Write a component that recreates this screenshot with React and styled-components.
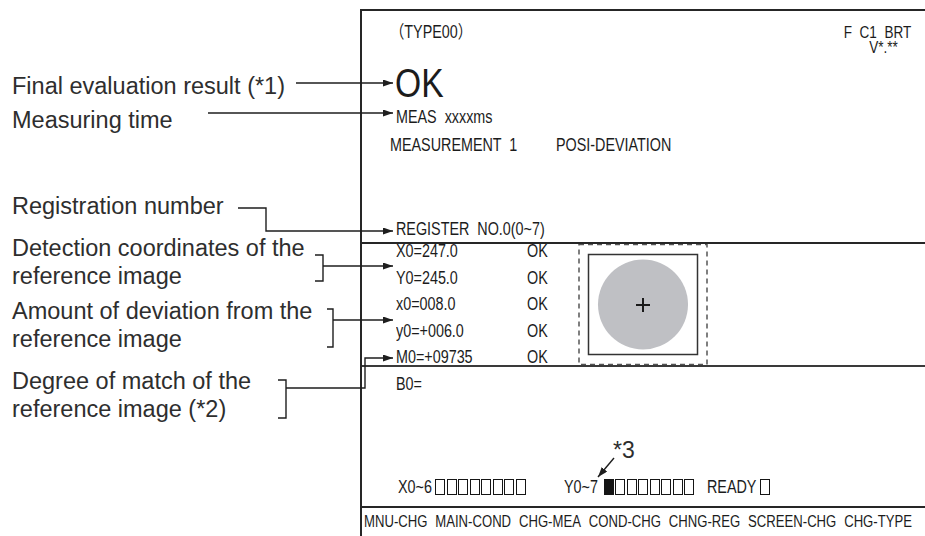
import React from "react";
import styled, { createGlobalStyle, css } from "styled-components";

const GlobalStyle = createGlobalStyle`
  html, body {
    margin: 0;
    padding: 0;
    background: #fff;
  }
  body {
    font-family: "Liberation Sans", Arial, sans-serif;
  }
`;

// the monitor font is a condensed sans; Liberation Sans squeezed horizontally stands in for it
const NARROW = 0.82;
const condensed = css`
  display: inline-block;
  transform: scaleX(${NARROW});
  transform-origin: left center;
`;

const labels = [
  { gap: 0, lines: ["Final evaluation result (*1)"] },
  { gap: 6, lines: ["Measuring time"] },
  { gap: 58, lines: ["Registration number"] },
  { gap: 14, lines: ["Detection coordinates of the", "reference image"] },
  { gap: 7, lines: ["Amount of deviation from the", "reference image"] },
  { gap: 14, lines: ["Degree of match of the", "reference image (*2)"] },
];

const results = [
  { name: "X0=247.0", state: "OK" },
  { name: "Y0=245.0", state: "OK" },
  { name: "x0=008.0", state: "OK" },
  { name: "y0=+006.0", state: "OK" },
  { name: "M0=+09735", state: "OK" },
];

const menu = ["MNU-CHG", "MAIN-COND", "CHG-MEA", "COND-CHG", "CHNG-REG", "SCREEN-CHG", "CHG-TYPE"];

function Bits({ count, lit = -1 }) {
  return (
    <BitStrip>
      {Array.from({ length: count }, (_, i) => (
        <Bit key={i} $on={i === lit} />
      ))}
    </BitStrip>
  );
}

function Leaders() {
  return (
    <Overlay viewBox="0 0 925 536">
      <defs>
        <marker
          id="tip"
          viewBox="0 0 10 7"
          refX="10"
          refY="3.5"
          markerWidth="10"
          markerHeight="7"
          markerUnits="userSpaceOnUse"
          orient="auto"
        >
          <path d="M0,0 L10,3.5 L0,7 z" fill="#1e1e1e" />
        </marker>
      </defs>
      <g fill="none" stroke="#1e1e1e" strokeWidth="1.4">
        <path d="M296,83 H393" markerEnd="url(#tip)" />
        <path d="M208,113 H393" markerEnd="url(#tip)" />
        <path d="M238,208 H266 V231 H393" markerEnd="url(#tip)" />
        <path d="M315,255 H323 V281 H315" />
        <path d="M323,266 H393" markerEnd="url(#tip)" />
        <path d="M327,309 H333 V347 H327" />
        <path d="M333,320 H393" markerEnd="url(#tip)" />
        <path d="M278,380 H286 V418 H278" />
        <path d="M286,388 H365 V358 H393" markerEnd="url(#tip)" />
        <path d="M614,458 L598,477" markerEnd="url(#tip)" />
      </g>
    </Overlay>
  );
}

function Preview() {
  return (
    <PreviewBox>
      <svg width="130" height="121" viewBox="0 0 130 121">
        <rect x="1" y="0.5" width="128" height="120" fill="none" stroke="#555" strokeWidth="1.5" strokeDasharray="5 4" />
        <rect x="10.5" y="10.5" width="109" height="100" fill="none" stroke="#333" strokeWidth="1.5" />
        <circle cx="65" cy="60.5" r="45" fill="#bfc0c4" />
        <path d="M58,61 H72 M65,54 V68" stroke="#1a1a1a" strokeWidth="2" />
      </svg>
    </PreviewBox>
  );
}

export default function App() {
  return (
    <>
      <GlobalStyle />
      <Page>
        <LabelColumn>
          {labels.map((l, i) => (
            <Label key={i} $gap={l.gap}>
              {l.lines.map((t, j) => (
                <div key={j}>{t}</div>
              ))}
            </Label>
          ))}
        </LabelColumn>

        <Screen>
          <TopBlock>
            <Header>
              <TypeName>（TYPE00）</TypeName>
              <Status>
                <div>F  C1  BRT</div>
                <Version>V*.**</Version>
              </Status>
            </Header>
            <Verdict>OK</Verdict>
            <ScreenLine $top={4}>MEAS  xxxxms</ScreenLine>
            <MeasureRow>
              <Cell>MEASUREMENT  1</Cell>
              <Cell>POSI-DEVIATION</Cell>
            </MeasureRow>
            <Register>REGISTER  NO.0(0~7)</Register>
          </TopBlock>

          <TableBand>
            <RowList>
              {results.map((r) => (
                <ResultRow key={r.name}>
                  <Cell>{r.name}</Cell>
                  <Cell>{r.state}</Cell>
                </ResultRow>
              ))}
            </RowList>
            <Preview />
          </TableBand>

          <BottomBlock>
            <ScreenLine $top={7}>B0=</ScreenLine>
            <BitsRow>
              <BitLabel $width={37}>X0~6</BitLabel>
              <Bits count={8} />
              <BitLabel $space={38} $width={40}>Y0~7</BitLabel>
              <Bits count={8} lit={0} />
              <BitLabel $space={13} $width={53}>READY</BitLabel>
              <Bits count={1} />
            </BitsRow>
          </BottomBlock>

          <MenuBar>
            <MenuTrack>
              {menu.map((m) => (
                <span key={m}>{m}</span>
              ))}
            </MenuTrack>
          </MenuBar>
        </Screen>

        <Leaders />
        <Callout>*3</Callout>
      </Page>
    </>
  );
}

const Page = styled.div`
  position: relative;
  width: 925px;
  height: 536px;
  display: grid;
  grid-template-columns: 360px minmax(0, 1fr);
  overflow: hidden;
  background: #fff;
`;

const LabelColumn = styled.div`
  display: flex;
  flex-direction: column;
  padding: 72px 0 0 12px;
`;

const Label = styled.div`
  margin-top: ${({ $gap }) => $gap}px;
  font-size: 23.5px;
  line-height: 28px;
  color: #2e2e2e;
  white-space: nowrap;
`;

const Screen = styled.div`
  margin-top: 9px;
  height: 527px;
  min-width: 0;
  box-sizing: border-box;
  border-top: 2px solid #262626;
  border-left: 2px solid #262626;
  display: flex;
  flex-direction: column;
  font-size: 17.5px;
  color: #1c1c1c;
  white-space: pre;
`;

const TopBlock = styled.div`
  height: 233px;
  box-sizing: border-box;
  border-bottom: 2px solid #262626;
  padding: 0 14px 0 34px;
  display: flex;
  flex-direction: column;
  align-items: flex-start;
`;

const Header = styled.div`
  align-self: stretch;
  margin-top: 11px;
  display: flex;
  justify-content: space-between;
  align-items: flex-start;
`;

const TypeName = styled.span`
  ${condensed};
  margin-left: -6px;
  line-height: 20px;
  font-family: "Liberation Sans", "Noto Sans CJK JP", sans-serif;
`;

const Status = styled.div`
  padding-top: 3px;
  font-size: 16.5px;
  line-height: 15px;
  transform: scaleX(${NARROW});
  transform-origin: right center;
`;

const Version = styled.div`
  padding-left: 31px;
`;

const Verdict = styled.div`
  ${condensed};
  margin-top: 8px;
  font-size: 41px;
  line-height: 40px;
  margin-left: -1px;
`;

const ScreenLine = styled.div`
  ${condensed};
  margin-top: ${({ $top }) => $top}px;
  line-height: 20px;
`;

const Cell = styled.span`
  ${condensed};
`;

const MeasureRow = styled.div`
  margin-top: 8px;
  line-height: 20px;
  display: grid;
  grid-template-columns: 166px auto;
  margin-left: -6px;
`;

const Register = styled.div`
  ${condensed};
  margin-top: auto;
  margin-bottom: 3px;
  line-height: 20px;
`;

const TableBand = styled.div`
  height: 123px;
  box-sizing: border-box;
  border-bottom: 2px solid #3a3a3a;
  display: grid;
  grid-template-columns: 216px 130px 1fr;
`;

const RowList = styled.div`
  margin-top: -6px;
  padding-left: 34px;
`;

const ResultRow = styled.div`
  display: grid;
  grid-template-columns: 131px auto;
  line-height: 26.5px;
`;

const PreviewBox = styled.div`
  display: flex;
`;

const BottomBlock = styled.div`
  flex: 1;
  display: flex;
  flex-direction: column;
  align-items: flex-start;
  padding-left: 34px;
`;

const BitsRow = styled.div`
  margin-top: auto;
  margin-bottom: 9px;
  height: 20px;
  display: flex;
  align-items: center;
  padding-left: 2px;
`;

const BitLabel = styled.span`
  ${condensed};
  width: ${({ $width }) => $width}px;
  margin-left: ${({ $space = 0 }) => $space}px;
  line-height: 20px;
`;

const BitStrip = styled.span`
  display: flex;
  gap: 1.5px;
`;

const Bit = styled.span`
  width: 10px;
  height: 16px;
  box-sizing: border-box;
  border: 1px solid #151515;
  background: ${({ $on }) => ($on ? "#151515" : "#fff")};
`;

const MenuBar = styled.div`
  height: 30px;
  flex: none;
  box-sizing: border-box;
  border-top: 2px solid #262626;
  display: flex;
  align-items: center;
  padding-left: 2px;
  font-size: 16px;
`;

const MenuTrack = styled.div`
  width: ${548 / NARROW}px;
  flex: none;
  display: flex;
  justify-content: space-between;
  transform: scaleX(${NARROW});
  transform-origin: left center;
`;

const Overlay = styled.svg`
  position: absolute;
  inset: 0;
  width: 925px;
  height: 536px;
  pointer-events: none;
`;

const Callout = styled.span`
  position: absolute;
  left: 613px;
  top: 436px;
  font-size: 23px;
  line-height: 28px;
  color: #2e2e2e;
`;
